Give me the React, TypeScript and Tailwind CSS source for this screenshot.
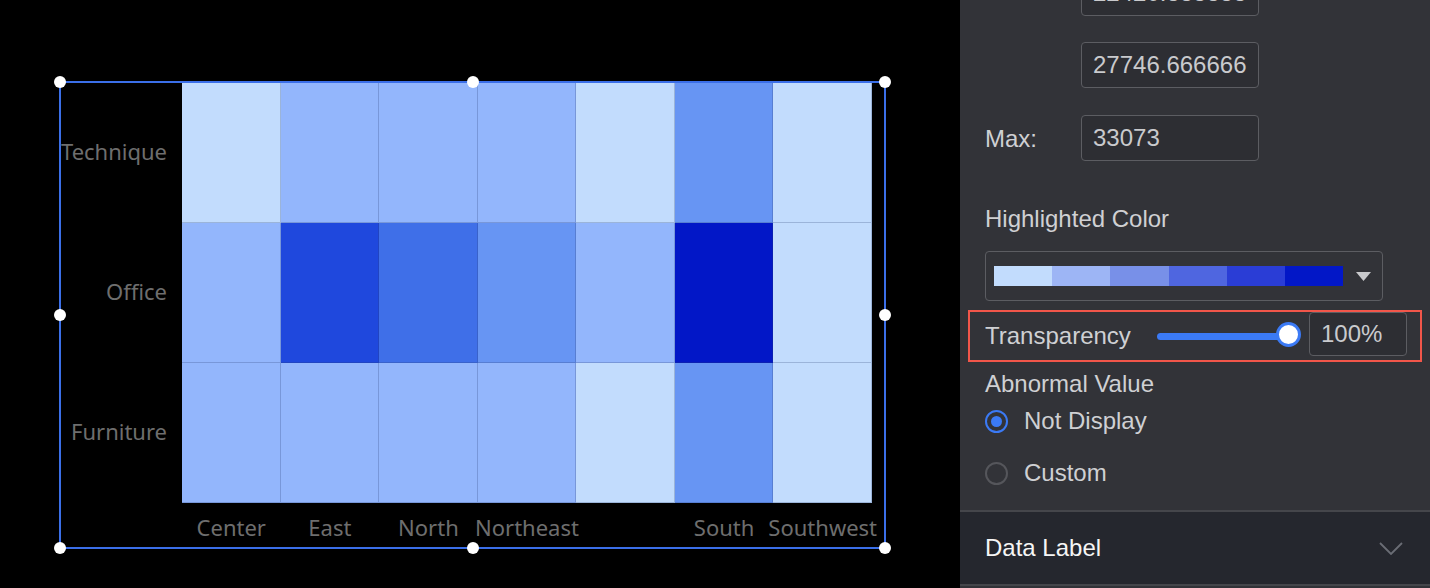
const rows = ["Technique", "Office", "Furniture"];
const cols = ["Center", "East", "North", "Northeast", "", "South", "Southwest"];

const L1 = "bg-[#c2dcfd]";
const L2 = "bg-[#93b6fc]";
const L3 = "bg-[#6795f3]";
const L4 = "bg-[#3f6fe8]";
const L5 = "bg-[#1f48dd]";
const L6 = "bg-[#0217c7]";

const cells = [
  [L1, L2, L2, L2, L1, L3, L1],
  [L2, L5, L4, L3, L2, L6, L1],
  [L2, L2, L2, L2, L1, L3, L1],
];

const scale = ["bg-[#c2dcfd]", "bg-[#9db5f5]", "bg-[#7890e8]", "bg-[#4f66e0]", "bg-[#2a3dd6]", "bg-[#0217c7]"];

function Handle({ className }: { className: string }) {
  return <div className={"absolute h-[12px] w-[12px] rounded-full bg-white " + className} />;
}

function ChartBox() {
  return (
    <div className="relative h-[468px] w-[827px] border-2 border-[#3b6fe8] font-['Noto_Sans',sans-serif]">
      <div className="flex">
        <div className="flex w-[121px] flex-col">
          {rows.map((r) => (
            <div key={r} className="flex h-[140px] items-center justify-end pb-[3px] pr-[15px] text-[22px] text-[#6e6e6e]">
              {r}
            </div>
          ))}
        </div>
        <div className="w-[690px]">
          <div className="grid h-[420px] grid-cols-7 grid-rows-3">
            {cells.map((row, i) =>
              row.map((c, j) => (
                <div
                  key={i + "-" + j}
                  className={"border-r border-b border-[rgba(40,60,110,0.25)] " + c}
                />
              ))
            )}
          </div>
          <div className="mt-[9px] grid grid-cols-7">
            {cols.map((c, i) => (
              <div key={i} className="flex justify-center whitespace-nowrap text-[22px] leading-[30px] text-[#6e6e6e]">
                {c}
              </div>
            ))}
          </div>
        </div>
      </div>

      <Handle className="left-[-7px] top-[-7px]" />
      <Handle className="left-[406px] top-[-7px]" />
      <Handle className="left-[818px] top-[-7px]" />
      <Handle className="left-[-7px] top-[226px]" />
      <Handle className="left-[818px] top-[226px]" />
      <Handle className="left-[-7px] top-[459px]" />
      <Handle className="left-[406px] top-[459px]" />
      <Handle className="left-[818px] top-[459px]" />
    </div>
  );
}

function NumInput({ value }: { value: string }) {
  return (
    <div className="flex h-[46px] w-[178px] items-center overflow-hidden whitespace-nowrap rounded-[4px] border border-[#5c5d62] bg-[#2d2e33] pl-[11px] pr-[4px] text-[24px] text-[#c9cacd]">
      <span className="overflow-hidden">{value}</span>
    </div>
  );
}

function Radio({ checked, label, className }: { checked?: boolean; label: string; className: string }) {
  return (
    <div className={"flex h-[24px] items-center " + className}>
      {checked ? (
        <div className="flex h-[23px] w-[23px] items-center justify-center rounded-full border-[2.5px] border-[#3b7af5]">
          <div className="h-[11px] w-[11px] rounded-full bg-[#3b7af5]" />
        </div>
      ) : (
        <div className="h-[23px] w-[23px] rounded-full border-2 border-[#55565b]" />
      )}
      <span className="ml-[16px]">{label}</span>
    </div>
  );
}

function Panel() {
  return (
    <div className="flex h-[588px] w-[470px] shrink-0 flex-col bg-[#323338] font-['Liberation_Sans',Arial,sans-serif] text-[24px] text-[#cfd0d3]">
      <div className="-mt-[30px] flex flex-col pl-[25px]">
        <div className="ml-[96px]">
          <NumInput value="22420.333333" />
        </div>
        <div className="ml-[96px] mt-[26px]">
          <NumInput value="27746.666666" />
        </div>
        <div className="mt-[27px] flex items-center">
          <span className="w-[96px] pt-[2px]">Max:</span>
          <NumInput value="33073" />
        </div>

        <div className="mt-[44px] leading-[28px]">Highlighted Color</div>

        <div className="mt-[18px] flex h-[50px] w-[398px] items-center rounded-[4px] border border-[#5c5d62] pl-[8px]">
          <div className="flex h-[20px] w-[349px]">
            {scale.map((s) => (
              <div key={s} className={"flex-1 " + s} />
            ))}
          </div>
          <svg width="15" height="9" viewBox="0 0 15 9" className="ml-[13px]">
            <path d="M0 0h15L7.5 9z" fill="#c9cacd" />
          </svg>
        </div>

        <div className="-ml-[17px] mt-[9px] flex h-[52px] w-[454px] border-[2.5px] border-[#f2564a]">
          <span className="flex w-[187px] items-center pl-[15px]">Transparency</span>
          <div className="relative flex w-[144px] items-center">
            <div className="h-[7px] w-[133px] rounded-full bg-[#3b7af5]" />
            <div className="absolute left-[119px] top-[10px] h-[25px] w-[25px] rounded-full border-[3px] border-[#3b7af5] bg-white" />
          </div>
          <div className="ml-[8px] flex h-[44px] w-[98px] items-center rounded-[4px] border border-[#5c5d62] bg-[#2d2e33] pl-[11px] text-[#c9cacd]">
            100%
          </div>
        </div>

        <div className="mt-[8px] leading-[28px]">Abnormal Value</div>
        <Radio checked label="Not Display" className="mt-[11px]" />
        <Radio label="Custom" className="mt-[28px]" />
      </div>

      <div className="mt-[25px] flex h-[76px] items-center justify-between border-y-2 border-[#45464b] bg-[#25272e] pl-[25px] pr-[27px]">
        <span className="text-[#f5f5f5]">Data Label</span>
        <svg width="24" height="13" viewBox="0 0 24 13">
          <path d="M1 1l11 11L23 1" stroke="#6a6d75" strokeWidth="1.8" fill="none" />
        </svg>
      </div>
    </div>
  );
}

export default function App() {
  return (
    <div className="flex h-[588px] w-[1430px] overflow-hidden bg-black">
      <div className="w-[960px] shrink-0 pl-[59px] pt-[81px]">
        <ChartBox />
      </div>
      <Panel />
    </div>
  );
}
